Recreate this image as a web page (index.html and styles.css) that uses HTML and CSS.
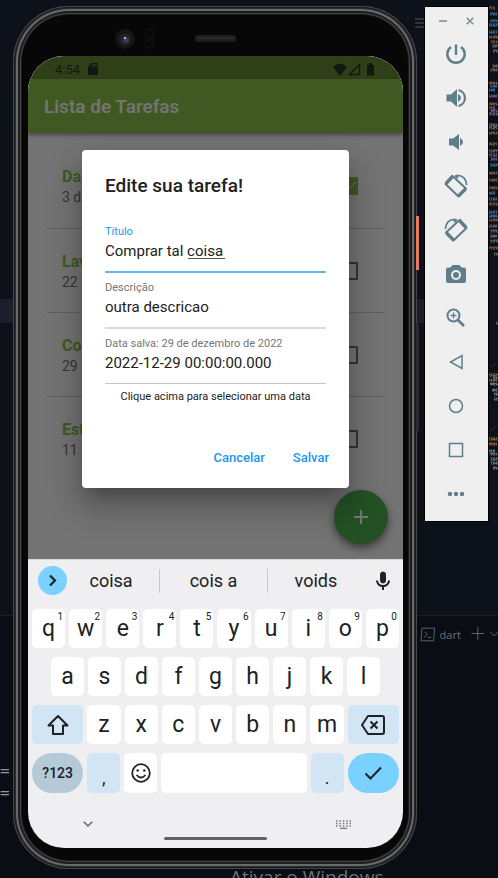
FILE: index.html
```html
<!DOCTYPE html>
<html lang="pt-BR">
<head>
<meta charset="utf-8">
<meta name="viewport" content="width=device-width, initial-scale=1">
<title>Lista de Tarefas</title>
<link rel="stylesheet" href="styles.css">
</head>
<body>
<div class="desktop">
  <div class="editor">
    <div class="editor-line"></div>
    <div class="editor-panel"></div>
    <svg class="editor-menu" width="10" height="11" viewBox="0 0 10 11"><path d="M0 1h10M0 5h10M0 9h10" stroke="#3c4048" stroke-width="1.5"/></svg>
    <div class="editor-log">=:<br>=:</div>
    <div class="terminal-tab">
      <svg width="16" height="15" viewBox="0 0 16 15" fill="none" stroke="#59617c"><path d="M2 1h13l-1 13H1zM4.500 4.500l3 3-3.500 3M8 10.500h3.500"/></svg>
      <span>dart</span>
      <svg class="terminal-add" width="28" height="14" viewBox="0 0 28 14" fill="none" stroke="#626670"><path d="M7 0v13M.5 6.500h13M20 5l4 4 4-4"/></svg>
    </div>
    <svg class="minimap" width="9" height="480" viewBox="0 0 9 480" fill="none" stroke-width="3">
      <g>
        <path stroke="#6b4a38" d="M0 8h6M0 37h9M2 42h7M3 66h6M0 83h9M0 104h9M0 133h9M0 144h8M0 173h9M0 180h9M0 188h9M0 204h9M0 220h9M0 248h9"/>
        <path stroke="#2b6284" d="M1 14h7M1 21h8M0 25h9M0 32h8M1 86h7M0 90h6M1 165h8M0 193h6M0 212h8M0 216h9"/>
        <path stroke="#594a76" d="M0 96h9M0 108h6M1 111h8M0 114h9M0 155h8M1 159h8"/>
        <path stroke="#55585d" d="M3 46h6M4 51h5M1 70h8M0 125h9M0 128h8M0 151h9M0 199h8M0 226h8M1 231h8M1 236h7M1 241h8M5 254h4M7 323h2"/>
      </g>
      <g>
        <path stroke="#7c5730" d="M0 375h9M0 380h8M0 439h9M0 444h8M1 454h8"/>
        <path stroke="#496d89" d="M4 378h5M5 399h4M0 451h6M1 459h8"/>
        <path stroke="#6a6a6a" d="M1 384h8M3 390h6M5 394h4M2 463h7M4 468h5"/>
        <path stroke="#444b50" stroke-width="1" stroke-dasharray="1 1" d="M1 369l8-8M1 432l8-8"/>
      </g>
      <g stroke="#0d1119" stroke-width="1" stroke-dasharray="1 2 2 1 1 3">
        <path d="M1.500 5v465M6.500 8v462"/><path d="M3.500 7v463M8.500 4v466" stroke-dasharray="2 1 1 3"/>
      </g>
    </svg>
    <div class="activation">Ativar o Windows</div>
  </div>

  <main class="phone">
    <svg class="sensors" viewBox="0 0 130 24" width="130" height="24">
      <circle cx="12" cy="12" r="10" fill="#151515"/><circle cx="12" cy="12" r="6" fill="#20222a"/><circle cx="13" cy="13" r="3" fill="#363d5a"/><circle cx="12" cy="11" r="1" fill="#ddd"/>
      <rect x="32" y="2" width="9" height="20" rx="4" fill="#0e0e0e"/><circle cx="36.500" cy="7" r="3" fill="#080808"/><circle cx="36.500" cy="17" r="3" fill="#080808"/>
      <rect x="82" y="8" width="41" height="7" rx="3" fill="#1e1e1e"/><path d="M84 11h37" stroke="#292929" stroke-width="2"/>
    </svg>
    <span class="side-key power-key"></span>
    <span class="side-key volume-key"></span>

    <div class="screen">
      <section class="app">
        <div class="status">
          <span>4:54</span>
          <svg width="10" height="12" viewBox="0 0 10 12"><path d="M3 0h6q1 0 1 1v10q0 1-1 1H1q-1 0-1-1V4z" fill="#2b3620"/><path d="M4 1v3M6 1v3M8 1v3" stroke="#688b38"/></svg>
          <svg class="signals" width="43" height="13" viewBox="0 0 43 13" fill="#2b3620"><path d="M0 4Q7-3 14 4L7 13z"/><path d="M16.500 11.500L26.500 1.500v10z" fill="none" stroke="#2b3620" stroke-width="1.400"/><path d="M34 2h2V0h3v2h2v10.500h-7z"/></svg>
        </div>
        <header class="app-bar"><h1>Lista de Tarefas</h1></header>
        <ul class="tasks">
          <li><div><b>Da</b><small>3 de</small></div><input type="checkbox" aria-label="Da" checked></li>
          <li><div><b>Lav</b><small>22 d</small></div><input type="checkbox" aria-label="Lav"></li>
          <li><div><b>Co</b><small>29 d</small></div><input type="checkbox" aria-label="Co"></li>
          <li><div><b>Est</b><small>11 d</small></div><input type="checkbox" aria-label="Est"></li>
        </ul>
        <button class="fab" aria-label="Adicionar"><svg width="14" height="14" viewBox="0 0 14 14"><path d="M7 0v14M0 7h14" stroke="#fff" stroke-width="2"/></svg></button>
        <div class="scrim">
          <form class="dialog">
            <h2>Edite sua tarefa!</h2>
            <div class="field focused"><label for="titulo">Título</label><input id="titulo" type="text" value="Comprar tal coisa"></div>
            <div class="field"><label for="descricao">Descrição</label><input id="descricao" type="text" value="outra descricao"></div>
            <div class="field date"><label for="data">Data salva: 29 de dezembro de 2022</label><input id="data" type="text" value="2022-12-29 00:00:00.000"></div>
            <p>Clique acima para selecionar uma data</p>
            <div class="actions"><button type="button">Cancelar</button><button type="button">Salvar</button></div>
          </form>
        </div>
      </section>

      <section class="keyboard">
        <div class="suggestions">
          <button class="expand" aria-label="Expandir"><svg width="29" height="29" viewBox="0 0 29 29"><path d="M12 9.500l5 5-5 5" fill="none" stroke="#17232b" stroke-width="2.200"/></svg></button>
          <div class="words"><button>coisa</button><button class="best">cois a</button><button>voids</button></div>
          <button class="mic" aria-label="Voz"><svg width="14" height="20" viewBox="0 0 14 20" fill="none" stroke="#202124" stroke-width="2"><rect x="4.500" y="1" width="5" height="11" rx="2.500" fill="#202124" stroke-width="1"/><path d="M1 9.500a6 5.500 0 0 0 12 0M7 15v4"/></svg></button>
        </div>
        <div class="keys">
          <button>q<sup>1</sup></button><button>w<sup>2</sup></button><button>e<sup>3</sup></button><button>r<sup>4</sup></button><button>t<sup>5</sup></button><button>y<sup>6</sup></button><button>u<sup>7</sup></button><button>i<sup>8</sup></button><button>o<sup>9</sup></button><button>p<sup>0</sup></button>
        </div>
        <div class="keys home-row">
          <button>a</button><button>s</button><button>d</button><button>f</button><button>g</button><button>h</button><button>j</button><button>k</button><button>l</button>
        </div>
        <div class="keys">
          <button class="wide tint" aria-label="Shift"><svg width="22" height="22" viewBox="0 0 22 22"><path d="M11 2L1.500 11.500H6v8.500h10v-8.500h4.500z" fill="none" stroke="#202124" stroke-width="2" stroke-linejoin="round"/></svg></button>
          <button>z</button><button>x</button><button>c</button><button>v</button><button>b</button><button>n</button><button>m</button>
          <button class="wide tint" aria-label="Apagar"><svg width="24" height="20" viewBox="0 0 24 20" fill="none" stroke="#202124" stroke-width="2" stroke-linejoin="round"><path d="M7 1h14q2 0 2 2v14q0 2-2 2H7l-6-9z"/><path d="M9.500 6.500l7 7M16.500 6.500l-7 7"/></svg></button>
        </div>
        <div class="keys last">
          <button class="wide pill symbols">?123</button>
          <button class="narrow tint punct">,</button>
          <button class="narrow" aria-label="Emoji"><svg width="20" height="20" viewBox="0 0 20 20" fill="none" stroke="#202124" stroke-width="1.800"><circle cx="10" cy="10" r="8.800"/><path d="M5.500 12q4.500 5 9 0"/><circle cx="6.700" cy="7.500" r="1.200" fill="#202124" stroke="none"/><circle cx="13.300" cy="7.500" r="1.200" fill="#202124" stroke="none"/></svg></button>
          <button class="space" aria-label="Espaço"></button>
          <button class="narrow tint punct">.</button>
          <button class="wide pill enter" aria-label="Concluir"><svg width="18" height="14" viewBox="0 0 18 14"><path d="M1.500 7.500l5 5L17 1.500" fill="none" stroke="#202124" stroke-width="2"/></svg></button>
        </div>
        <div class="nav">
          <svg width="10" height="6" viewBox="0 0 10 6"><path d="M.7.700L5 5 9.300.700" fill="none" stroke="#666" stroke-width="1.400"/></svg>
          <svg width="15" height="9" viewBox="0 0 15 9" stroke="#777" stroke-width="1.300" fill="none"><path stroke-dasharray="1.500 1.900" d="M0 1h15M0 3.500h15M0 6h15"/><path d="M4 8.300h7"/></svg>
        </div>
        <div class="home-bar"></div>
      </section>
    </div>
  </main>

  <aside class="toolbar">
    <div class="window-buttons">
      <button aria-label="Minimizar"><svg width="8" height="8" viewBox="0 0 8 8"><path d="M0 4h8" stroke="#90a4ae" stroke-width="2"/></svg></button>
      <button aria-label="Fechar"><svg width="8" height="8" viewBox="0 0 8 8"><path d="M.7.700l6.600 6.600M7.300.700L.700 7.300" stroke="#78909c" stroke-width="1.500"/></svg></button>
    </div>
    <button aria-label="Ligar"><svg viewBox="0 0 24 24"><path d="M12 2.500V13M7 5a8.700 8.700 0 1 0 10 0" stroke-width="2.400"/></svg></button>
    <button aria-label="Aumentar volume"><svg viewBox="0 0 24 24"><path d="M2.500 8.500h4.500l6-5.500v18l-6-5.500H2.500z" class="solid"/><path d="M14 8v8q3-1.500 3-4t-3-4z" class="solid"/><path d="M14.500 4a8.200 8.200 0 0 1 0 16" stroke-width="2.200"/></svg></button>
    <button aria-label="Diminuir volume"><svg viewBox="0 0 24 24"><path d="M5 8.500h4l6-4.500v16l-6-4.500H5z" class="solid"/><path d="M16 8v8q3-1.500 3-4t-3-4z" class="solid"/></svg></button>
    <button aria-label="Girar para a direita"><svg viewBox="0 0 24 24"><path d="M8.500 2L22 14.500 14.500 22.500 1.500 10z" stroke-width="2" stroke-linejoin="round"/><path d="M9 2L2 9.500M21.500 15l-7 7" stroke-width="3.400"/><path d="M12.500 1.300Q22 1 22.700 11M14 4l-3-2.500" stroke-width="1.700"/></svg></button>
    <button aria-label="Girar para a esquerda"><svg viewBox="0 0 24 24"><path d="M15.500 2L2 14.500 9.500 22.500 22.500 10z" stroke-width="2" stroke-linejoin="round"/><path d="M15 2l7 7.500M2.500 15l7 7" stroke-width="3.400"/><path d="M11.500 1.300Q2 1 1.300 11M10 4l3-2.500" stroke-width="1.700"/></svg></button>
    <button aria-label="Captura de tela"><svg viewBox="0 0 24 24"><path class="solid" fill-rule="evenodd" d="M8.500 3h7l2 2.500H20q2 0 2 2V19q0 2-2 2H4q-2 0-2-2V7.500q0-2 2-2h2.500zM12 8a5 5 0 1 0 0 10 5 5 0 0 0 0-10zM12 10a3 3 0 1 1 0 6 3 3 0 0 1 0-6z"/></svg></button>
    <button aria-label="Zoom"><svg viewBox="0 0 24 24"><circle cx="9.500" cy="9.500" r="6" stroke-width="2"/><path d="M14 14l6 6" stroke-width="2.600"/><path d="M9.500 6.500v6M6.500 9.500h6" stroke-width="1.300"/></svg></button>
    <button aria-label="Voltar"><svg viewBox="0 0 24 24"><path d="M18 5.500v13L6.500 12z" stroke-width="1.500"/></svg></button>
    <button aria-label="Início"><svg viewBox="0 0 24 24"><circle cx="12" cy="12" r="6.500" stroke-width="1.500"/></svg></button>
    <button aria-label="Visão geral"><svg viewBox="0 0 24 24"><rect x="5.500" y="5.500" width="13" height="13" stroke-width="1.500"/></svg></button>
    <button aria-label="Mais"><svg viewBox="0 0 24 24"><circle class="solid" cx="6" cy="12" r="2.200"/><circle class="solid" cx="12" cy="12" r="2.200"/><circle class="solid" cx="18" cy="12" r="2.200"/></svg></button>
  </aside>
</div>
</body>
</html>
```
FILE: styles.css
```css
* { box-sizing: border-box; }
body { margin: 0; background: #0d1119; font-family: Roboto, "Liberation Sans", sans-serif; }
button { border: 0; padding: 0; background: none; font: inherit; color: inherit; display: flex; align-items: center; justify-content: center; }
svg { display: block; }

.desktop { position: relative; display: flex; align-items: flex-start; gap: 8px; min-height: 100vh; padding: 6px 10px 9px 13px; overflow: hidden; }

/* Code editor behind the emulator */
.editor { position: absolute; inset: 0; color: #777; font-family: "Open Sans", sans-serif; }
.editor-line { position: absolute; top: 299px; left: 0; right: 73px; height: 24px; background: #1e1e2b; }
.editor-panel { position: absolute; top: 615px; bottom: 0; left: 0; right: 0; background: #0a0d14; border-top: 1px solid #1b1f27; }
.editor-menu { position: absolute; top: 18px; right: 73px; }
.editor-log { position: absolute; top: 760px; left: 0; font: 16px/22px "DejaVu Sans Mono", monospace; color: #9a9a9a; }
.terminal-tab { position: absolute; top: 624px; right: 0; display: flex; align-items: center; gap: 4px; width: 78px; height: 20px; font-size: 11px; color: #686d78; }
.terminal-add { margin-left: 6px; }
.minimap { position: absolute; top: 0; right: 0; }
.activation { position: absolute; top: 864px; left: 230px; font-size: 19px; line-height: 26px; white-space: nowrap; color: #707276; }

/* Device */
.phone {
  position: relative; flex: 1; min-width: 0; padding: 50px 14px 21px 15px; border-radius: 56px; background: #080708;
  box-shadow: inset 0 0 0 1px #454648, inset 0 0 0 2px #18191b, inset 0 0 0 3px #2b2c2e, inset 0 0 0 5px #68696c, inset 0 0 0 7px #1d1d1f, inset 0 0 0 8px #444547, inset 0 0 0 9px #1a1a1b;
}
.sensors { position: absolute; top: 21px; left: 100px; }
.side-key { position: absolute; right: -2px; width: 3px; }
.power-key { top: 210px; height: 54px; background: #e87a5f; }
.volume-key { top: 318px; height: 107px; background: #2c2c2d; }
.screen { border-radius: 36px; overflow: hidden; background: #efeff1; }

.app { position: relative; height: 503px; background: #fafafa; }
.status { display: flex; align-items: center; gap: 8px; height: 23px; padding: 3px 27px 0; background: #688b38; font-size: 13px; color: #2b3620; }
.signals { margin-left: auto; }
.app-bar { display: flex; align-items: center; height: 54px; padding: 2px 16px 0; background: #8bc34a; box-shadow: 0 2px 4px rgba(0, 0, 0, .4); }
h1 { margin: 0; font-size: 19px; line-height: 22px; font-weight: 500; color: #fff; }
.tasks { margin: 0; padding: 11px 19px; list-style: none; }
.tasks li { display: flex; justify-content: space-between; align-items: center; height: 84px; padding: 0 26px 0 15px; }
.tasks li + li { border-top: 1px solid #d0d0d0; }
.tasks b { display: block; padding-top: 2px; font-size: 16px; line-height: 20px; font-weight: 700; color: #8bc34a; }
.tasks small { display: block; font-size: 14px; line-height: 20px; color: #757575; }
.tasks input { appearance: none; width: 18px; height: 18px; margin: 0; border: 2px solid #757575; border-radius: 1px; }
.tasks input:checked { border: 0; background: linear-gradient(135deg, transparent 46%, #fff 46% 56%, transparent 56%) 9px 4px / 7px 9px no-repeat, #8bc34a; }
.fab { position: absolute; right: 15px; bottom: 15px; width: 54px; height: 54px; border-radius: 50%; background: #4caf50; box-shadow: 0 4px 8px rgba(0, 0, 0, .5); }
.scrim { position: absolute; inset: 0; display: flex; align-items: center; padding: 23px 54px 0; background: rgba(0, 0, 0, .54); }

.dialog { flex: 1; min-width: 0; padding: 25px 23px 14px; border-radius: 4px; background: #fff; box-shadow: 0 11px 15px -7px rgba(0, 0, 0, .2), 0 16px 32px 3px rgba(0, 0, 0, .28); color: #212121; }
h2 { margin: 0 0 28px; font-size: 19px; line-height: 22px; font-weight: 500; }
.field { margin-bottom: 8px; padding-bottom: 10px; border-bottom: 2px solid #dbdbdb; }
.field label { display: block; margin-bottom: 2px; font-size: 11px; line-height: 14px; color: #757575; white-space: nowrap; }
.field input { display: block; width: 100%; height: 20px; padding: 0; border: 0; outline: 0; background: none; font: 15px/20px Roboto, sans-serif; color: #212121; }
.focused { border-color: #64b5f6; }
.focused label { color: #2196f3; }
.focused input { background: linear-gradient(#555, #555) 83px 17px / 37px 1px no-repeat; }
.date { margin-bottom: 5px; border-bottom: 1px solid #c4c4c4; }
.dialog p { margin: 0 0 35px; font-size: 11px; line-height: 16px; text-align: center; white-space: nowrap; }
.actions { display: flex; justify-content: flex-end; gap: 12px; margin-right: -11px; }
.actions button { height: 34px; padding: 0 8px; font-size: 13px; font-weight: 500; color: #2196f3; }

/* On-screen keyboard */
.keyboard { padding: 0 4px 8px; color: #202124; border-top: 1px solid #d8d8da; }
.suggestions { display: flex; align-items: center; height: 41px; padding: 0 9px 0 6px; margin-bottom: 8px; }
.expand { width: 29px; height: 29px; border-radius: 50%; background: #78d1ff; }
.words { flex: 1; display: flex; height: 24px; margin: 0 12px 0 -4px; }
.words button { flex: 9 1 0; font-size: 18px; }
.words .best { flex-grow: 10; border: solid #c8c8ca; border-width: 0 1px; }
.keys { display: flex; gap: 4px; margin-bottom: 9px; }
.keys button { position: relative; flex: 1 1 0; height: 39px; border-radius: 5px; background: #fff; font-size: 23px; line-height: 28px; }
.keys sup { position: absolute; top: 2px; right: 2px; font-size: 10px; line-height: 12px; }
.home-row { padding: 0 19px; }
.keys .wide { flex: 0 0 14%; }
.keys .narrow { flex: 0 0 9%; }
.keys .tint { background: #d2e5f4; }
.keys .pill { border-radius: 20px; }
.keys .symbols { background: #b4cad8; font-size: 14px; font-weight: 500; }
.keys .enter { background: #78d1ff; }
.keys .punct { padding-top: 10px; font-size: 18px; }
.last button { height: 40px; }
.nav { display: flex; justify-content: space-between; align-items: center; height: 26px; padding: 0 48px 0 51px; margin-top: 18px; }
.home-bar { width: 28%; height: 3px; margin: 0 auto; border-radius: 2px; background: #636365; }

/* Emulator controls */
.toolbar { position: relative; flex: 0 0 63px; margin-top: 1px; padding-bottom: 5px; background: #efefef; box-shadow: 0 0 0 1px #000; }
.toolbar > button { width: 62px; height: 44px; }
.toolbar > button svg { width: 24px; height: 24px; fill: none; stroke: #607d8b; }
.toolbar .solid { fill: #607d8b; stroke: none; }
.window-buttons { display: flex; justify-content: space-between; height: 25px; padding: 3px 14px 0; }
```
